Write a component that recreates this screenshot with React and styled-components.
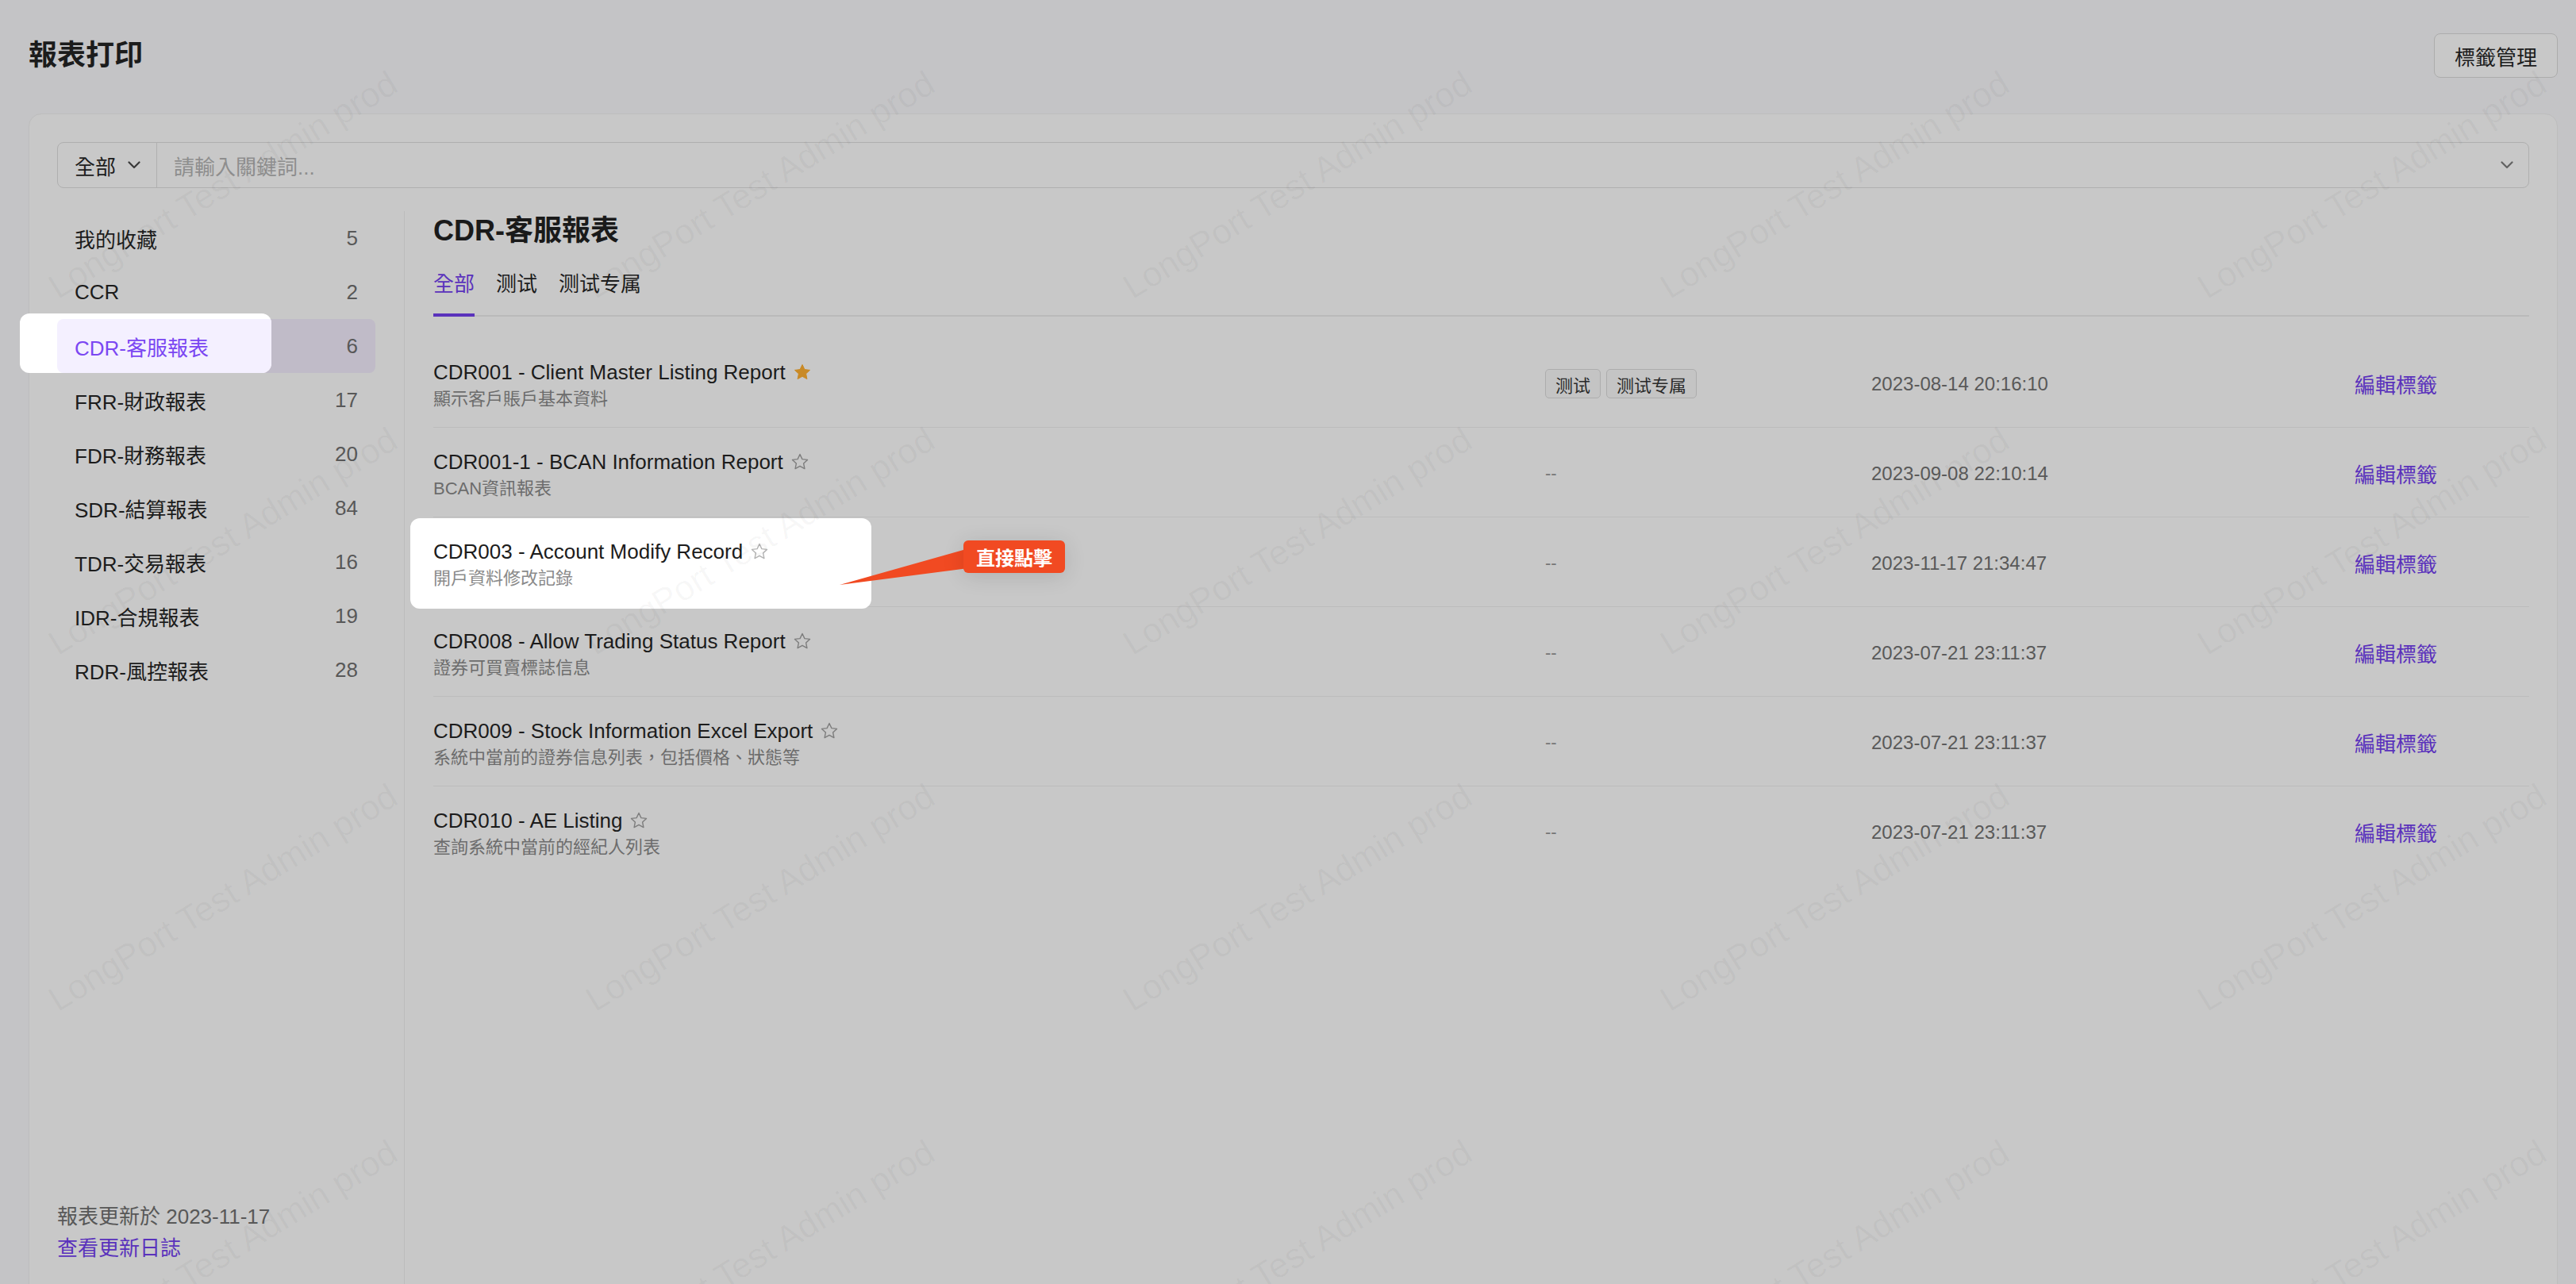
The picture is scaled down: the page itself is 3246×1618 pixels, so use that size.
import React from "react";
import styled, { createGlobalStyle } from "styled-components";

const GlobalStyle = createGlobalStyle`
  html, body {
    margin: 0;
    padding: 0;
    background: #c4c4c6;
  }
  * {
    box-sizing: border-box;
  }
  body {
    font-family: "Liberation Sans", "Noto Sans CJK TC", sans-serif;
    color: #1c1c1c;
  }
`;

const navItems = [
  { name: "我的收藏", count: 5 },
  { name: "CCR", count: 2 },
  { name: "CDR-客服報表", count: 6, active: true },
  { name: "FRR-財政報表", count: 17 },
  { name: "FDR-財務報表", count: 20 },
  { name: "SDR-結算報表", count: 84 },
  { name: "TDR-交易報表", count: 16 },
  { name: "IDR-合規報表", count: 19 },
  { name: "RDR-風控報表", count: 28 },
];

const reports = [
  {
    title: "CDR001 - Client Master Listing Report",
    desc: "顯示客戶賬戶基本資料",
    starred: true,
    tags: ["测试", "测试专属"],
    time: "2023-08-14 20:16:10",
  },
  {
    title: "CDR001-1 - BCAN Information Report",
    desc: "BCAN資訊報表",
    tags: [],
    time: "2023-09-08 22:10:14",
  },
  {
    title: "CDR003 - Account Modify Record",
    desc: "開戶資料修改記錄",
    tags: [],
    time: "2023-11-17 21:34:47",
    lit: true,
  },
  {
    title: "CDR008 - Allow Trading Status Report",
    desc: "證券可買賣標誌信息",
    tags: [],
    time: "2023-07-21 23:11:37",
  },
  {
    title: "CDR009 - Stock Information Excel Export",
    desc: "系統中當前的證券信息列表，包括價格、狀態等",
    tags: [],
    time: "2023-07-21 23:11:37",
  },
  {
    title: "CDR010 - AE Listing",
    desc: "查詢系統中當前的經紀人列表",
    tags: [],
    time: "2023-07-21 23:11:37",
  },
];

const tabs = ["全部", "测试", "测试专属"];

const Chevron = ({ color }) => (
  <svg width="16" height="10" viewBox="0 0 16 10">
    <polyline
      points="1.5,1.5 8,8 14.5,1.5"
      fill="none"
      stroke={color}
      strokeWidth="2.2"
      strokeLinecap="round"
      strokeLinejoin="round"
    />
  </svg>
);

const StarIcon = ({ filled, lit }) => {
  const stroke = filled ? "#c98a26" : lit ? "#b3b3b3" : "#7d7d7d";
  return (
    <svg width="24" height="24" viewBox="0 0 24 24">
      <polygon
        points="12,2.5 14.9,8.6 21.5,9.4 16.6,13.9 17.9,20.6 12,17.3 6.1,20.6 7.4,13.9 2.5,9.4 9.1,8.6"
        fill={filled ? "#c98a26" : "none"}
        stroke={stroke}
        strokeWidth={filled ? 1 : 1.4}
        strokeLinejoin="round"
      />
    </svg>
  );
};

const App = () => {
  return (
    <>
      <GlobalStyle />
      <Page>
        <Header>
          <PageTitle>報表打印</PageTitle>
          <GhostButton>標籤管理</GhostButton>
        </Header>

        <Card>
          <SearchBar>
            <ScopeSelect>
              全部
              <Chevron color="#3a3a3a" />
            </ScopeSelect>
            <SearchInput>請輸入關鍵詞...</SearchInput>
            <SearchArrow>
              <Chevron color="#626262" />
            </SearchArrow>
          </SearchBar>

          <Body>
            <Sidebar>
              {navItems.map((item) => (
                <NavItem key={item.name} active={item.active}>
                  {item.active && (
                    <Spotlight $left={-47} $top={-7} $width={317} $height={75}>
                      <LitFill />
                    </Spotlight>
                  )}
                  <NavLabel active={item.active}>{item.name}</NavLabel>
                  <NavCount>{item.count}</NavCount>
                </NavItem>
              ))}
              <SidebarFooter>
                <FooterText>報表更新於 2023-11-17</FooterText>
                <FooterLink>查看更新日誌</FooterLink>
              </SidebarFooter>
            </Sidebar>

            <Content>
              <SectionTitle>CDR-客服報表</SectionTitle>
              <TabBar>
                {tabs.map((t, i) => (
                  <Tab key={t} active={i === 0}>
                    {t}
                  </Tab>
                ))}
              </TabBar>

              <ReportList>
                {reports.map((r) => (
                  <ReportRow key={r.title}>
                    {r.lit && (
                      <Spotlight $left={-29} $top={1} $width={581} $height={114} />
                    )}
                    <TitleCell>
                      <TitleLine>
                        {r.title}
                        <StarIcon filled={r.starred} lit={r.lit} />
                      </TitleLine>
                      <Desc lit={r.lit}>{r.desc}</Desc>
                    </TitleCell>
                    <TagCell>
                      {r.tags.length ? (
                        r.tags.map((t) => <Tag key={t}>{t}</Tag>)
                      ) : (
                        <Empty>--</Empty>
                      )}
                    </TagCell>
                    <TimeCell>{r.time}</TimeCell>
                    <ActionLink>編輯標籤</ActionLink>
                    {r.lit && (
                      <>
                        <CalloutTail width="170" height="60" viewBox="0 0 170 60">
                          <polygon points="0,56 170,8 170,34" fill="#f14a22" />
                        </CalloutTail>
                        <Callout>直接點擊</Callout>
                      </>
                    )}
                  </ReportRow>
                ))}
              </ReportList>
            </Content>
          </Body>
        </Card>

        <WatermarkLayer>
          {Array.from({ length: 20 }).map((_, i) => (
            <WatermarkCell key={i}>
              <WatermarkText>LongPort Test Admin prod</WatermarkText>
            </WatermarkCell>
          ))}
        </WatermarkLayer>
      </Page>
    </>
  );
};

export default App;

const Page = styled.div`
  position: relative;
  height: 1618px;
  overflow: hidden;
  background: #c4c4c6;
  padding: 42px 23px 0 36px;
  display: flex;
  flex-direction: column;
`;

const Header = styled.div`
  display: flex;
  align-items: center;
  justify-content: space-between;
  height: 56px;
`;

const PageTitle = styled.h1`
  margin: 0;
  font-size: 36px;
  line-height: 50px;
  font-weight: 600;
  color: #1c1c1c;
`;

const GhostButton = styled.button`
  height: 56px;
  padding: 0 25px;
  border: 1px solid #acacac;
  border-radius: 8px;
  background: #c8c8c8;
  font-family: inherit;
  font-size: 26px;
  color: #1c1c1c;
`;

const Card = styled.div`
  margin-top: 45px;
  height: 1500px;
  flex-shrink: 0;
  background: #c8c8c8;
  border: 1px solid #bdbdbd;
  border-radius: 16px;
  padding: 35px 35px 0;
  display: flex;
  flex-direction: column;
`;

const SearchBar = styled.div`
  display: flex;
  align-items: center;
  height: 58px;
  border: 1px solid #afafaf;
  border-radius: 8px;
  flex-shrink: 0;
`;

const ScopeSelect = styled.div`
  display: flex;
  align-items: center;
  gap: 15px;
  height: 100%;
  padding: 0 20px 0 21px;
  border-right: 1px solid #afafaf;
  font-size: 26px;
  color: #1c1c1c;
`;

const SearchInput = styled.div`
  flex: 1;
  padding-left: 21px;
  font-size: 26px;
  color: #8e8e8e;
`;

const SearchArrow = styled.div`
  display: flex;
  padding-right: 19px;
`;

const Body = styled.div`
  display: flex;
  flex: 1;
  min-height: 0;
  margin-top: 29px;
`;

const Sidebar = styled.div`
  width: 438px;
  flex-shrink: 0;
  padding: 0 36px 49px 0;
  border-right: 1px solid #bcbcbc;
  display: flex;
  flex-direction: column;
`;

const NavItem = styled.div`
  position: relative;
  z-index: 0;
  height: 68px;
  padding: 0 22px;
  display: flex;
  align-items: center;
  justify-content: space-between;
  border-radius: 8px;
  background: ${(p) => (p.active ? "#c0bbc8" : "transparent")};
  font-size: 26px;
`;

const Spotlight = styled.div`
  position: absolute;
  z-index: -1;
  left: ${(p) => p.$left}px;
  top: ${(p) => p.$top}px;
  width: ${(p) => p.$width}px;
  height: ${(p) => p.$height}px;
  background: #ffffff;
  border-radius: 12px;
  overflow: hidden;
`;

const LitFill = styled.div`
  position: absolute;
  left: 47px;
  top: 7px;
  width: 402px;
  height: 68px;
  border-radius: 8px;
  background: #f4f0ff;
`;

const NavLabel = styled.span`
  color: ${(p) => (p.active ? "#7b47f2" : "#1c1c1c")};
`;

const NavCount = styled.span`
  color: #585858;
`;

const SidebarFooter = styled.div`
  margin-top: auto;
  font-size: 26px;
  line-height: 40px;
`;

const FooterText = styled.div`
  color: #585858;
`;

const FooterLink = styled.div`
  color: #5a32bc;
`;

const Content = styled.div`
  flex: 1;
  min-width: 0;
  padding-left: 36px;
`;

const SectionTitle = styled.h2`
  margin: 0 0 22px;
  font-size: 36px;
  line-height: 50px;
  font-weight: 700;
  color: #1a1a1a;
`;

const TabBar = styled.div`
  display: flex;
  gap: 27px;
  box-shadow: inset 0 -2px 0 #bababa;
`;

const Tab = styled.div`
  font-size: 26px;
  line-height: 40px;
  padding-bottom: 17px;
  border-bottom: 4px solid ${(p) => (p.active ? "#5a32bc" : "transparent")};
  color: ${(p) => (p.active ? "#5a32bc" : "#1c1c1c")};
`;

const ReportList = styled.div`
  margin-top: 27px;
`;

const ReportRow = styled.div`
  position: relative;
  z-index: 0;
  display: grid;
  grid-template-columns: 1401px 411px 609px 1fr;
  align-items: center;
  padding: 25px 0 19px;
  border-bottom: 1px solid #bcbcbc;

  &:last-child {
    border-bottom: none;
  }
`;

const TitleCell = styled.div`
  display: flex;
  flex-direction: column;
`;

const TitleLine = styled.div`
  display: flex;
  align-items: center;
  gap: 9px;
  font-size: 26px;
  line-height: 36px;
  color: #1c1c1c;
`;

const Desc = styled.div`
  font-size: 22px;
  line-height: 32px;
  color: ${(p) => (p.lit ? "#8a8a8a" : "#6c6c6c")};
`;

const TagCell = styled.div`
  display: flex;
  gap: 7px;
  margin-top: -3px;
`;

const Tag = styled.span`
  height: 37px;
  padding: 0 12px;
  display: flex;
  align-items: center;
  border: 1px solid #adadad;
  border-radius: 5px;
  background: #c4c4c4;
  font-size: 22px;
  color: #2a2a2a;
`;

const Empty = styled.span`
  font-size: 22px;
  color: #767676;
`;

const TimeCell = styled.div`
  margin-top: -3px;
  font-size: 24px;
  color: #595959;
`;

const ActionLink = styled.div`
  margin-top: -4px;
  font-size: 26px;
  color: #5a32bc;
`;

const Callout = styled.div`
  position: absolute;
  z-index: 2;
  left: 668px;
  top: 29px;
  height: 41px;
  padding: 0 16px;
  display: flex;
  align-items: center;
  border-radius: 6px;
  background: #f14a22;
  box-shadow: 0 4px 28px rgba(0, 0, 0, 0.12);
  font-size: 24px;
  font-weight: 700;
  color: #ffffff;
`;

const CalloutTail = styled.svg`
  position: absolute;
  z-index: 2;
  left: 512px;
  top: 29px;
`;

const WatermarkLayer = styled.div`
  position: absolute;
  left: -58px;
  top: 8px;
  z-index: 20;
  display: grid;
  grid-template-columns: repeat(5, 677px);
  grid-auto-rows: 449px;
  pointer-events: none;
`;

const WatermarkCell = styled.div`
  display: flex;
  align-items: center;
  justify-content: center;
`;

const WatermarkText = styled.span`
  transform: rotate(-31.5deg);
  white-space: nowrap;
  font-family: "Liberation Sans", sans-serif;
  font-size: 44px;
  color: rgba(0, 0, 0, 0.035);
`;
